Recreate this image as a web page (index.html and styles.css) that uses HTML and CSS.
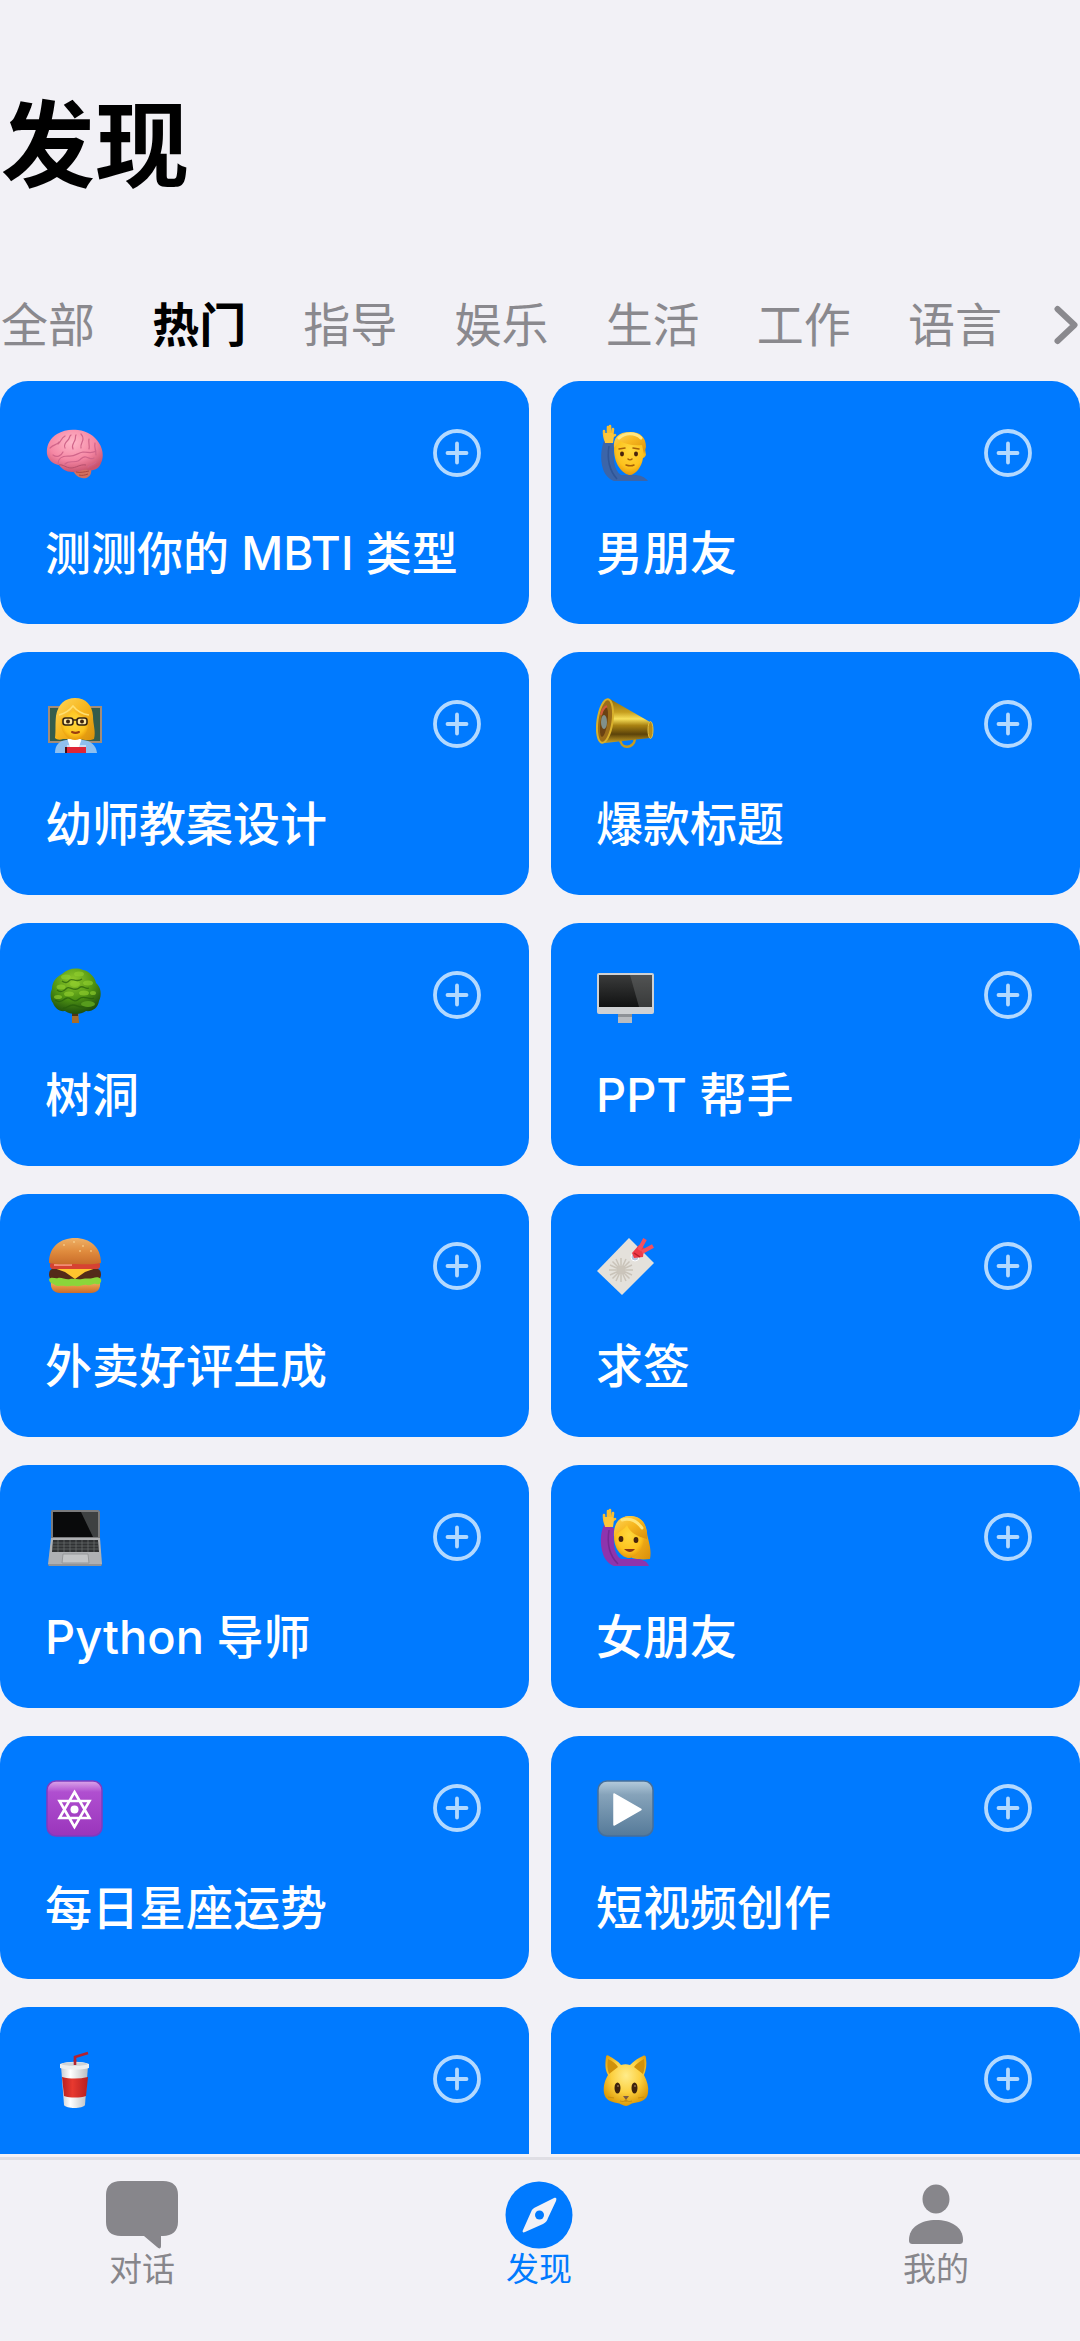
FILE: index.html
```html
<!DOCTYPE html>
<html lang="zh-CN">
<head>
  <meta charset="UTF-8">
  <meta name="viewport" content="width=device-width, initial-scale=1">
  <title>发现</title>
  <link rel="stylesheet" href="styles.css">
</head>
<body>
  <svg class="defs" aria-hidden="true">
    <defs>
      <symbol id="plus" viewBox="0 0 48 48">
        <circle cx="24" cy="24" r="22" fill="none" stroke="currentColor" stroke-width="3.8"/>
        <path d="M24 14.500v19M14.500 24h19" fill="none" stroke="currentColor" stroke-width="3.800" stroke-linecap="round"/>
      </symbol>
      <radialGradient id="skin" cx=".5" cy=".4" r=".65">
        <stop offset="0" stop-color="#ffd83c"/><stop offset=".65" stop-color="#fdc21d"/><stop offset="1" stop-color="#e08c05"/>
      </radialGradient>
      <linearGradient id="hair" x1="0" y1="0" x2="1" y2="1">
        <stop offset="0" stop-color="#ffd75a"/><stop offset=".5" stop-color="#f6b51d"/><stop offset="1" stop-color="#d98f0b"/>
      </linearGradient>
      <radialGradient id="brain" cx=".45" cy=".3" r=".7">
        <stop offset="0" stop-color="#ffb6c8"/><stop offset=".6" stop-color="#f587a4"/><stop offset="1" stop-color="#c9546f"/>
      </radialGradient>
      <linearGradient id="brass" x1="0" y1="0" x2="0" y2="1">
        <stop offset="0" stop-color="#8a6a10"/><stop offset=".3" stop-color="#c79f1f"/><stop offset=".45" stop-color="#f8e05a"/><stop offset=".6" stop-color="#a98212"/><stop offset=".8" stop-color="#5c430a"/><stop offset="1" stop-color="#c9a227"/>
      </linearGradient>
      <radialGradient id="leaf" cx=".45" cy=".25" r=".75">
        <stop offset="0" stop-color="#8fc92c"/><stop offset=".55" stop-color="#4f9413"/><stop offset="1" stop-color="#1e4f0d"/>
      </radialGradient>
      <linearGradient id="bun" x1="0" y1="0" x2="0" y2="1">
        <stop offset="0" stop-color="#eeb066"/><stop offset=".5" stop-color="#e08c3e"/><stop offset="1" stop-color="#c96c29"/>
      </linearGradient>
      <linearGradient id="screen" x1="0" y1="0" x2="0" y2="1">
        <stop offset="0" stop-color="#3a3b3b"/><stop offset="1" stop-color="#111212"/>
      </linearGradient>
      <linearGradient id="violet" x1="0" y1="0" x2="0" y2="1">
        <stop offset="0" stop-color="#dba6ea"/><stop offset=".2" stop-color="#b04fd0"/><stop offset="1" stop-color="#9a35bb"/>
      </linearGradient>
      <linearGradient id="steel" x1="0" y1="0" x2="0" y2="1">
        <stop offset="0" stop-color="#b4cbdc"/><stop offset=".25" stop-color="#86a3ba"/><stop offset="1" stop-color="#557a99"/>
      </linearGradient>
      <linearGradient id="cup" x1="0" y1="0" x2="1" y2="0">
        <stop offset="0" stop-color="#c9ccd0"/><stop offset=".35" stop-color="#ffffff"/><stop offset="1" stop-color="#b9bcc0"/>
      </linearGradient>
      <linearGradient id="cupRed" x1="0" y1="0" x2="1" y2="0">
        <stop offset="0" stop-color="#b8201f"/><stop offset=".4" stop-color="#e8392f"/><stop offset="1" stop-color="#b51f20"/>
      </linearGradient>
      <radialGradient id="cat" cx=".5" cy=".4" r=".6">
        <stop offset="0" stop-color="#ffec8a"/><stop offset=".55" stop-color="#fcd040"/><stop offset="1" stop-color="#dd9a08"/>
      </radialGradient>
      <g id="hand">
        <path d="M10 17c-2-3-2-6-2-10M12 13V3M14 13V2M16 13l1-8M14 14l5-3" fill="none" stroke="#f7bd31" stroke-width="2.600" stroke-linecap="round"/>
        <path d="M8 9h9l1 3-1 7H9z" fill="#fcc63a"/>
      </g>
    </defs>
  </svg>

  <header class="header">
    <h1>发现</h1>
  </header>

  <nav class="tabs" aria-label="分类">
    <div class="tab-list">
      <button class="tab" type="button">全部</button>
      <button class="tab active" type="button">热门</button>
      <button class="tab" type="button">指导</button>
      <button class="tab" type="button">娱乐</button>
      <button class="tab" type="button">生活</button>
      <button class="tab" type="button">工作</button>
      <button class="tab" type="button">语言</button>
    </div>
    <button class="more" type="button" aria-label="更多">
      <svg viewBox="0 0 24 40"><path d="M3.500 4l17 16-17 16" fill="none" stroke="currentColor" stroke-width="6" stroke-linecap="round" stroke-linejoin="round"/></svg>
    </button>
  </nav>

  <main class="grid">
    <article class="card">
      <div class="card-top">
        <svg class="emoji" viewBox="0 0 58 58">
          <path d="M28 45c2-3 8-4 14-3 4 1 5 3 4 7-1 4-5 6-9 5-5-1-8-4-9-9z" fill="#d2705f"/>
          <path d="M2 30C1 22 5 14 12 10 18 6 26 5 33 6c9 1 17 6 21 13 4 6 5 14 2 20-2 6-7 8-13 7-7-1-10 3-16 2-6 0-10-3-13-7-6-1-11-5-12-11z" fill="url(#brain)"/>
          <path d="M13 40c0-6 5-8 10-8 7 1 9-3 15-4 6 0 8 2 13-1M8 31c4 3 8 1 10-3M5 24c4-4 7-3 9-6M13 20c3-2 3-6 7-8M20 24c-2-3 1-6 3-8s1-4 3-5M28 25c-2-4 1-6 2-9s0-4 1-5M36 24c-1-4 2-6 2-9 0-2-1-4-2-5M44 25c1-4-1-6 0-10M51 31c0-5-2-8-1-12M20 40c4-4 9-1 13-3s4-5 8-4 5 3 8 1M43 43c2-3 6-2 8-5" fill="none" stroke="#d0658a" stroke-width="1.200" stroke-linecap="round"/>
          <path d="M14 41c4-1 7 3 12 3s9-4 15-3" stroke="#b54f6d" fill="none"/>
          <path d="M31 48c4 1 8 0 13-1M34 51c3 1 6 0 9-1" stroke="#a94842" fill="none"/>
        </svg>
        <button class="add" type="button" aria-label="添加"><svg><use href="#plus"/></svg></button>
      </div>
      <h2 class="long">测测你的 MBTI 类型</h2>
    </article>

    <article class="card">
      <div class="card-top">
        <svg class="emoji" viewBox="0 0 58 58">
          <path d="M8 17c-3 8-4 18-1 28 2 6 6 10 11 12h34c-3-4-8-6-14-6H25c-7-5-8-15-7-31z" fill="#3c65a8"/>
          <path d="M13 22c-2 12 0 24 8 33" fill="none" stroke="#2f5596" stroke-width="1.500"/>
          <use href="#hand"/>
          <path d="M18 25c0-11 6-15 15-15 10 0 16 4 16 15l1 6c-1 2-2 3-3 3-1 9-8 17-13 17S18 43 18 25z" fill="url(#skin)"/>
          <path d="M18 24C17 14 22 8 34 8c11 0 16 6 16 15l-2 7-2-9c-9 1-17-1-22-4-1 3-4 4-6 7z" fill="url(#hair)"/>
          <path d="M23 14c6-5 15-6 22 0" fill="none" stroke="#ffe784" stroke-width="3" stroke-linecap="round"/>
          <path d="M23 25l6-1M37 24l6 1M32 35c1 1 3 1 4 0M30 41c3 1 6 1 8 0" fill="none" stroke="#a65f09" stroke-width="1.500" stroke-linecap="round"/>
          <ellipse cx="26" cy="30" rx="2" ry="2.400" fill="#47230d"/><ellipse cx="40" cy="30" rx="2" ry="2.400" fill="#47230d"/>
        </svg>
        <button class="add" type="button" aria-label="添加"><svg><use href="#plus"/></svg></button>
      </div>
      <h2>男朋友</h2>
    </article>

    <article class="card">
      <div class="card-top">
        <svg class="emoji" viewBox="0 0 58 58">
          <path d="M3 11h54v37H3z" fill="#a28c78"/><path d="M5 13h50v33H5z" fill="#345c4c"/>
          <path d="M10 58c0-8 4-12 11-13h17c8 1 13 5 14 13z" fill="#8fc0ef"/>
          <path d="M22 43h15l-3 9h-9z" fill="#fff"/>
          <path d="M10 43c1-8 0-12 1-22C13 9 20 3 30 3c11 0 17 7 18 18 0 9 3 15 1 23-5 2-10 1-14 0H18c-3 1-6 1-8-1z" fill="url(#hair)"/>
          <path d="M16 24c5-2 9-5 12-9 4 4 8 7 15 8v7c0 9-7 15-13 15S17 39 16 30z" fill="url(#skin)"/>
          <path d="M14 20c7-2 11-5 14-9 4 5 9 8 16 9" fill="none" stroke="#ffdf70" stroke-width="1.500"/>
          <rect x="18" y="23" width="10" height="7" rx="2.500" fill="#ffe7a0" stroke="#332313" stroke-width="1.600"/><rect x="32" y="23" width="10" height="7" rx="2.500" fill="#ffe7a0" stroke="#332313" stroke-width="1.600"/>
          <path d="M28 25h4" stroke="#332313" stroke-width="1.500"/><circle cx="23" cy="26.500" r="2" fill="#3e240d"/><circle cx="37" cy="26.500" r="2" fill="#3e240d"/>
          <path d="M27 37c2 1 5 1 7 0" fill="none" stroke="#9b3d10" stroke-width="2" stroke-linecap="round"/>
          <path d="M20 52h21v6H20z" fill="#df2637"/><path d="M20 52h2v6h-2z" fill="#481015"/><path d="M22 51h19" stroke="#fff"/>
        </svg>
        <button class="add" type="button" aria-label="添加"><svg><use href="#plus"/></svg></button>
      </div>
      <h2>幼师教案设计</h2>
    </article>

    <article class="card">
      <div class="card-top">
        <svg class="emoji" viewBox="0 0 58 58">
          <path d="M24 43c0 12 14 11 15 1" fill="none" stroke="#c69b20" stroke-width="2.500"/>
          <path d="M14 4l40 23c4 4 3 11 0 16L9 48z" fill="url(#brass)"/>
          <ellipse cx="9" cy="26" rx="7.500" ry="22" transform="rotate(8 9 26)" fill="#9b6d1a" stroke="#d8b02c" stroke-width="2"/>
          <ellipse cx="8" cy="27" rx="3.500" ry="15" transform="rotate(8 8 27)" fill="#6b4213"/>
          <ellipse cx="8" cy="27" rx="3" ry="7" fill="#81908a"/><path d="M5 20c1-5 4-8 6-9" stroke="#d1593b" stroke-width="2" fill="none"/>
          <ellipse cx="54.500" cy="35" rx="2.500" ry="8.500" fill="#b78b18" stroke="#e3c043"/>
        </svg>
        <button class="add" type="button" aria-label="添加"><svg><use href="#plus"/></svg></button>
      </div>
      <h2>爆款标题</h2>
    </article>

    <article class="card">
      <div class="card-top">
        <svg class="emoji" viewBox="0 0 58 58">
          <path d="M27 43h6l1 14h-7z" fill="#a86d2a"/><path d="M27 43h6v7h-6z" fill="#4b3515"/>
          <path d="M8 37c-3-4-3-10-1-14 0-7 4-12 10-15 5-5 14-7 21-4 6 1 12 7 13 13 5 4 6 12 3 18-1 7-7 11-13 10-5 4-16 4-21 0-6 1-10-3-12-8z" fill="url(#leaf)"/>
          <g fill="#91cf2e" opacity=".65"><ellipse cx="21" cy="11" rx="5" ry="2.500"/><ellipse cx="34" cy="8" rx="5" ry="2.500"/><ellipse cx="43" cy="17" rx="5" ry="2.500"/><ellipse cx="30" cy="18" rx="5" ry="3"/><ellipse cx="16" cy="21" rx="4.500" ry="2.500"/><ellipse cx="24" cy="28" rx="5" ry="2.500"/><ellipse cx="39" cy="27" rx="5" ry="2.500"/><ellipse cx="13" cy="31" rx="4" ry="2"/><ellipse cx="48" cy="27" rx="3" ry="2"/></g>
          <path d="M12 24c5 4 8 0 10-2s8 4 12 0 6 2 10 0M10 34c6 4 8-1 12-2s7 6 12 1 10 2 15-1M17 15c4 3 6 1 8-1s7 3 12-1M18 42c4 1 5-3 10-3s7 4 14 1" fill="none" stroke="#235c0a" stroke-width="1.300" opacity=".7"/>
          <ellipse cx="43" cy="38" rx="7" ry="3" fill="#579c1d"/>
        </svg>
        <button class="add" type="button" aria-label="添加"><svg><use href="#plus"/></svg></button>
      </div>
      <h2>树洞</h2>
    </article>

    <article class="card">
      <div class="card-top">
        <svg class="emoji" viewBox="0 0 58 58">
          <path d="M22 46h14v11H22z" fill="#b9bcc0"/><path d="M22 47h14v4H22z" fill="#8e9297"/>
          <rect x="1" y="7" width="57" height="41" rx="2" fill="#cfd1d3"/>
          <path d="M3 9h53v32H3z" fill="url(#screen)"/>
          <path d="M34 9h22v32H43z" fill="#757777" opacity=".4"/>
        </svg>
        <button class="add" type="button" aria-label="添加"><svg><use href="#plus"/></svg></button>
      </div>
      <h2>PPT 帮手</h2>
    </article>

    <article class="card">
      <div class="card-top">
        <svg class="emoji" viewBox="0 0 58 58">
          <path d="M6 45h49c1 7-3 11-9 11H15c-6 0-10-4-9-11z" fill="url(#bun)"/>
          <rect x="4" y="31" width="52" height="13" rx="6" fill="#542a19"/>
          <path d="M4 42c3-3 6 0 9-1s8 2 12 1 8 1 12 0 8 0 11-1 6-1 8 1c1 4-2 6-5 5s-5 2-9 1-7 2-11 1-8 1-11 0-7 1-10-1-6-2-6-6z" fill="#8bd63a"/>
          <path d="M6 30h48l-14 5-10 7-10-7z" fill="#ffc52e"/>
          <rect x="5" y="25" width="50" height="7" rx="3" fill="#d64232"/>
          <path d="M9 28h18" stroke="#f28b75" stroke-width="2"/>
          <path d="M4 26C4 10 15 1 30 1s26 9 26 25c-9 2-18 1-26 1s-17 1-26-1z" fill="url(#bun)"/>
          <g fill="#ffe1a3"><circle cx="19" cy="8" r=".8"/><circle cx="29" cy="5" r=".8"/><circle cx="38" cy="9" r=".8"/><circle cx="46" cy="14" r=".8"/><circle cx="35" cy="14" r=".8"/></g>
        </svg>
        <button class="add" type="button" aria-label="添加"><svg><use href="#plus"/></svg></button>
      </div>
      <h2>外卖好评生成</h2>
    </article>

    <article class="card">
      <div class="card-top">
        <svg class="emoji" viewBox="0 0 58 58">
          <path d="M33 1l25 25-32 32L1 34z" fill="#e4e1db"/>
          <g stroke="#c9c3b9" stroke-width="1.500"><path d="M25 21v24M13 33h24M16.500 24.500l17 17M33.500 24.500l-17 17M20 22l10 22M30 22L20 44M14 28l22 10M36 28L14 38"/></g>
          <circle cx="25" cy="33" r="4" fill="#cbc5bb"/>
          <circle cx="39" cy="20" r="4" fill="#b9c6df" stroke="#fff"/>
          <path d="M36 16l7-8 5 3-1 9-9 1z" fill="#ee3b49"/>
          <path d="M43 13l6-11M46 15l11-6" stroke="#f4505d" stroke-width="4"/><path d="M38 16l6 4" stroke="#b91f2c" stroke-width="1.500"/>
        </svg>
        <button class="add" type="button" aria-label="添加"><svg><use href="#plus"/></svg></button>
      </div>
      <h2>求签</h2>
    </article>

    <article class="card">
      <div class="card-top">
        <svg class="emoji" viewBox="0 0 58 58">
          <path d="M6 4c0-2 1-2 2-2h45c1 0 2 1 2 2v27H6z" fill="#7a7b7d"/>
          <path d="M8 4h45v25H8z" fill="#090a0b"/><path d="M36 4h17v25h-5z" fill="#56585a" opacity=".7"/>
          <path d="M6 30h49l2 26-1 2H4l-1-2z" fill="#aeb0b3"/>
          <path d="M8 32h45l1 12H7z" fill="#303234"/>
          <path d="M8 35h45M8 38h45M7 41h47M13 32v12M19 32v12M25 32v12M31 32v12M37 32v12M43 32v12M49 32v12" stroke="#77797b" stroke-width=".6"/>
          <path d="M18 46h25l1 9H17z" fill="#c2c4c6" stroke="#96989a"/><path d="M3 57h54" stroke="#77797b"/>
        </svg>
        <button class="add" type="button" aria-label="添加"><svg><use href="#plus"/></svg></button>
      </div>
      <h2>Python 导师</h2>
    </article>

    <article class="card">
      <div class="card-top">
        <svg class="emoji" viewBox="0 0 58 58">
          <path d="M23 23C21 13 26 8 34 8c11 0 16 7 17 17 1 8 5 15 3 26-8 1-14 0-18-1z" fill="url(#hair)"/>
          <path d="M8 17c-4 8-4 20-1 29 2 6 6 10 11 12h35c-2-5-7-7-13-7H25c-7-5-8-15-7-31z" fill="#8e34ad"/>
          <path d="M13 22c-2 12 0 25 9 34" fill="none" stroke="#742894" stroke-width="1.500"/>
          <use href="#hand"/>
          <path d="M18 29c0-11 6-17 15-17s15 6 15 17c0 12-8 21-15 21s-15-9-15-21z" fill="url(#skin)"/>
          <path d="M18 29c-1-13 5-21 16-21s18 9 17 23c-9-2-18-7-20-14-3 5-8 6-13 12z" fill="url(#hair)"/>
          <path d="M26 12c8-2 15 1 20 8" stroke="#ffe477" stroke-width="3" fill="none" stroke-linecap="round"/>
          <ellipse cx="25" cy="31" rx="2.400" ry="3" fill="#47230d"/><ellipse cx="40" cy="32" rx="2.400" ry="3" fill="#47230d"/>
          <path d="M28 41c4 4 8 4 11 0z" fill="#8d3412"/>
        </svg>
        <button class="add" type="button" aria-label="添加"><svg><use href="#plus"/></svg></button>
      </div>
      <h2>女朋友</h2>
    </article>

    <article class="card">
      <div class="card-top">
        <svg class="emoji" viewBox="0 0 58 58">
          <rect x="2" y="2" width="55" height="55" rx="9" fill="url(#violet)" stroke="#7d3bc0" stroke-width="1.500"/>
          <path d="M29.500 13l15 26h-30zM29.500 48l-15-26h30z" fill="none" stroke="#fff" stroke-width="2.600"/><circle cx="29.500" cy="30.500" r="4" fill="#fff"/>
        </svg>
        <button class="add" type="button" aria-label="添加"><svg><use href="#plus"/></svg></button>
      </div>
      <h2>每日星座运势</h2>
    </article>

    <article class="card">
      <div class="card-top">
        <svg class="emoji" viewBox="0 0 58 58">
          <rect x="2" y="2" width="55" height="55" rx="9" fill="url(#steel)" stroke="#456f9b" stroke-width="1.500"/>
          <path d="M18 15l27 15.500L18 46z" fill="#fff" stroke="#fff" stroke-width="1.500" stroke-linejoin="round"/>
        </svg>
        <button class="add" type="button" aria-label="添加"><svg><use href="#plus"/></svg></button>
      </div>
      <h2>短视频创作</h2>
    </article>

    <article class="card">
      <div class="card-top">
        <svg class="emoji" viewBox="0 0 58 58">
          <path d="M30 16V7l13-4" fill="none" stroke="#b3222f" stroke-width="2.600"/>
          <path d="M16 16h27l-3 39c-2 4-19 4-21 0z" fill="url(#cup)"/>
          <path d="M17 27c8 2 17 2 26 0l-2 19c-6 2-16 2-22 0z" fill="url(#cupRed)"/>
          <path d="M15 14c8-3 22-3 29 0v4c-8 2-21 2-29 0z" fill="#eceef0"/>
          <ellipse cx="29.500" cy="14" rx="13" ry="1.800" fill="#cfd2d5"/><path d="M30 15v-5" stroke="#b3222f" stroke-width="2.600"/>
        </svg>
        <button class="add" type="button" aria-label="添加"><svg><use href="#plus"/></svg></button>
      </div>
    </article>

    <article class="card">
      <div class="card-top">
        <svg class="emoji" viewBox="0 0 58 58">
          <path d="M10 7c0-2 2-2 3-1 5 3 9 5 12 9 3-1 6-1 9 0 4-4 8-7 13-9 2-1 3 0 3 2 1 7 0 12-2 17 3 6 5 12 4 18-1 7-7 9-14 10-3 0-5 3-8 3s-6-3-9-3c-7-1-12-4-13-10-1-7 1-13 4-18-3-5-3-11-2-18z" fill="url(#cat)"/>
          <path d="M12 9c5 2 8 5 10 8l-9 7c-2-5-2-10-1-15zM48 9c-4 2-8 5-10 8l9 7c2-5 2-10 1-15z" fill="#cf910b"/>
          <ellipse cx="21.500" cy="38" rx="3" ry="5.500" fill="#3d220d"/><ellipse cx="38.500" cy="38" rx="3" ry="5.500" fill="#3d220d"/>
          <circle cx="22" cy="36" r="1" fill="#8a6a48"/><circle cx="39" cy="36" r="1" fill="#8a6a48"/>
          <path d="M27 46h6l-3 4z" fill="#7b5a45"/><path d="M30 49v3M24 51c3 1 4 1 6-1 2 2 3 2 6 1M12 47l6 1M42 48l6-1" fill="none" stroke="#c98f12" stroke-width="1.200"/>
        </svg>
        <button class="add" type="button" aria-label="添加"><svg><use href="#plus"/></svg></button>
      </div>
    </article>
  </main>

  <nav class="tabbar" aria-label="主导航">
    <a href="#chat">
      <svg viewBox="0 0 72 68"><path d="M15 0h42c10 0 15 5 15 14v27c0 9-6 14-15 14h-2v10c0 3-2 3-4 1L38 55H15C5 55 0 50 0 41V14C0 5 5 0 15 0z" fill="currentColor"/></svg>
      <span>对话</span>
    </a>
    <a href="#discover" class="active" aria-current="page">
      <svg viewBox="0 0 72 68"><circle cx="36" cy="34" r="33.500" fill="currentColor"/><path d="M51 17c2-1 3 0 2 3l-8 17c-1 3-2 4-5 6l-18 8c-2 1-3 0-2-2l8-18c1-3 3-4 5-5z" fill="#f2f1f6"/><circle cx="36.500" cy="34" r="4.500" fill="currentColor"/></svg>
      <span>发现</span>
    </a>
    <a href="#me">
      <svg viewBox="0 0 72 68"><ellipse cx="36" cy="18" rx="13.500" ry="14.500" fill="currentColor"/><path d="M9 59c0-13 12-20 27-20s27 7 27 20c0 3-1 4-4 4H13c-3 0-4-1-4-4z" fill="currentColor"/></svg>
      <span>我的</span>
    </a>
  </nav>
</body>
</html>
```
FILE: styles.css
```css
* {
  box-sizing: border-box;
}

body {
  margin: 0;
  height: 100vh;
  display: flex;
  flex-direction: column;
  overflow: hidden;
  background: #f2f1f6;
  color: #000;
  font-family: Inter, 'Noto Sans CJK SC', sans-serif;
}

button {
  padding: 0;
  border: 0;
  background: none;
  font: inherit;
  cursor: pointer;
}

.defs {
  position: absolute;
  width: 0;
  height: 0;
}

.header {
  padding: 90px 1px 95px;
}

h1 {
  margin: 0;
  font-size: 94px;
  font-weight: 600;
  line-height: 112px;
}

.tabs {
  display: flex;
  align-items: center;
  padding: 0 2px 28px 1px;
}

.tab-list {
  flex: 1;
  display: flex;
  justify-content: space-between;
}

.tab {
  color: #8a898e;
  font-size: 47px;
  line-height: 56px;
}

.tab.active {
  color: #000;
  font-weight: 600;
}

.more {
  margin-left: 52px;
  color: #8a898e;
}

.more svg {
  display: block;
  width: 24px;
  height: 40px;
}

/* 卡片列表 */
.grid {
  flex: 1;
  min-height: 0;
  overflow: hidden;
  display: grid;
  grid-template-columns: 1fr 1fr;
  grid-auto-rows: max-content;
  gap: 28px 22px;
}

.card {
  min-height: 243px;
  padding: 43px 48px 43px 45px;
  border-radius: 28px;
  background: #007aff;
  color: #fff;
}

.card-top {
  display: flex;
  justify-content: space-between;
  align-items: center;
}

.emoji {
  width: 58px;
  height: 58px;
}

.add {
  color: #b3d9ff;
}

.add svg {
  display: block;
  width: 48px;
  height: 48px;
}

h2 {
  margin: 43px 0 0;
  font-size: 47px;
  font-weight: 500;
  line-height: 56px;
  white-space: nowrap;
}

h2.long {
  font-size: 46px;
}

.tabbar {
  display: flex;
  justify-content: space-between;
  margin-top: 3px;
  padding: 21px 108px 52px 106px;
  border-top: 3px solid #dfdee4;
}

.tabbar a {
  display: flex;
  flex-direction: column;
  align-items: center;
  color: #87868b;
  font-size: 33px;
  line-height: 40px;
  text-decoration: none;
}

.tabbar svg {
  width: 72px;
  height: 68px;
}

.tabbar .active {
  color: #007aff;
}
```
